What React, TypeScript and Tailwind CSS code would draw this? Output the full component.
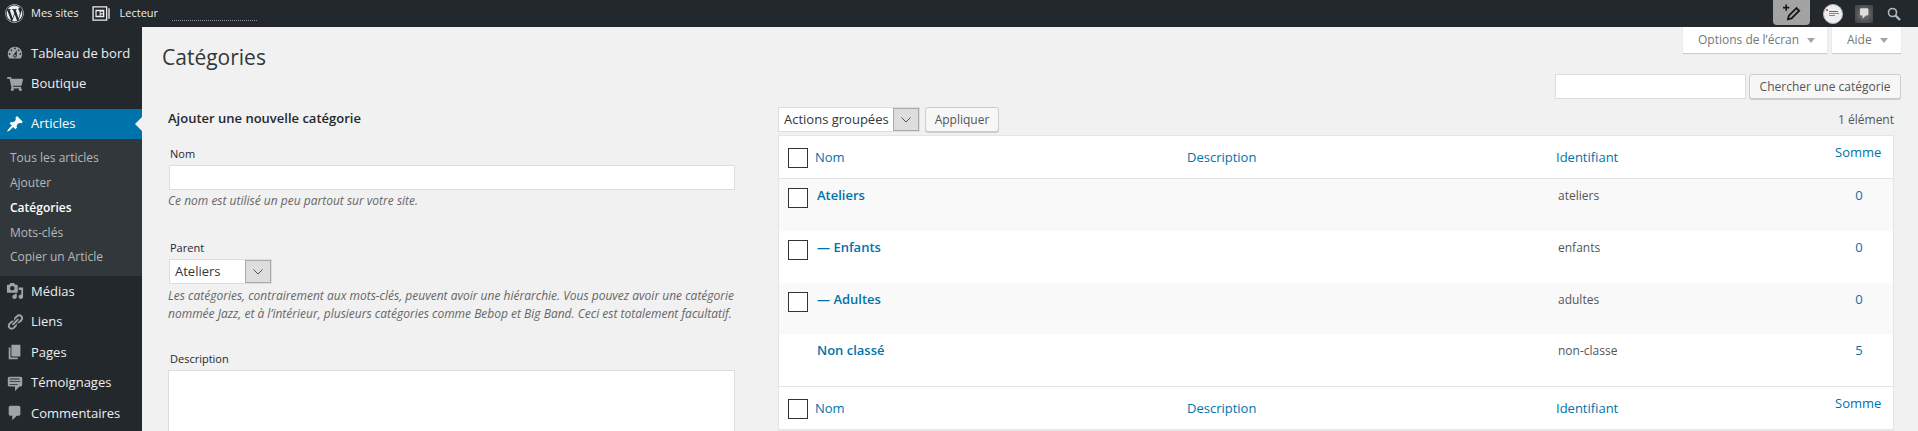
import { FaWordpress, FaShoppingCart } from 'react-icons/fa'

const icons = {
  dashboard: 'M3.76 16h12.48c1.1-1.37 1.76-3.11 1.76-5 0-4.42-3.58-8-8-8s-8 3.58-8 8c0 1.89.66 3.63 1.76 5zM10 4c.55 0 1 .45 1 1s-.45 1-1 1-1-.45-1-1 .45-1 1-1zM6 6c.55 0 1 .45 1 1s-.45 1-1 1-1-.45-1-1 .45-1 1-1zm8 0c.55 0 1 .45 1 1s-.45 1-1 1-1-.45-1-1 .45-1 1-1zm-5.37 5.55L12 7v6c0 1.1-.9 2-2 2s-2-.9-2-2c0-.57.24-1.08.63-1.45zM4 10c.55 0 1 .45 1 1s-.45 1-1 1-1-.45-1-1 .45-1 1-1zm12 0c.55 0 1 .45 1 1s-.45 1-1 1-1-.45-1-1 .45-1 1-1zm-5 3c0-.55-.45-1-1-1s-1 .45-1 1 .45 1 1 1 1-.45 1-1z',
  pin: 'M10.44 3.02l1.82-1.82 6.36 6.35-1.83 1.82c-1.05-.68-2.48-.57-3.41.36l-.75.75c-.92.93-1.04 2.35-.35 3.41l-1.83 1.82-2.41-2.41-2.8 2.79c-.42.42-3.38 2.71-3.8 2.29s1.86-3.39 2.28-3.81l2.79-2.79L4.1 9.36l1.83-1.82c1.05.69 2.48.57 3.41-.36l.75-.75c.93-.92 1.04-2.35.35-3.41z',
  media: 'M13 11V4c0-.55-.45-1-1-1h-1.67L9 1H5L3.67 3H2c-.55 0-1 .45-1 1v7c0 .55.45 1 1 1h10c.55 0 1-.45 1-1zM7 4.5c1.38 0 2.5 1.12 2.5 2.5S8.38 9.5 7 9.5 4.5 8.38 4.5 7 5.62 4.5 7 4.5zM14 6h5v10.5c0 1.38-1.12 2.5-2.5 2.5S14 17.88 14 16.5s1.12-2.5 2.5-2.5c.17 0 .34.02.5.05V9h-3V6zm-4 8.05V13h2v3.5c0 1.38-1.12 2.5-2.5 2.5S7 17.88 7 16.5 8.12 14 9.5 14c.17 0 .34.02.5.05z',
  links: 'M17.74 2.76c1.68 1.69 1.68 4.41 0 6.1l-1.53 1.52c-1.12 1.12-2.7 1.47-4.14 1.09l2.62-2.61.76-.77.76-.76c.84-.84.84-2.2 0-3.04-.84-.85-2.2-.85-3.04 0l-.77.76-3.38 3.38c-.37-1.44-.02-3.02 1.1-4.14l1.52-1.53c1.69-1.68 4.42-1.68 6.1 0zM8.59 13.43l5.34-5.34c.42-.42.42-1.1 0-1.52-.44-.43-1.13-.39-1.53 0l-5.33 5.34c-.42.42-.42 1.1 0 1.52.44.43 1.13.39 1.52 0zm-.76 2.29l4.14-4.15c.38 1.44.03 3.02-1.09 4.14l-1.52 1.53c-1.69 1.68-4.41 1.68-6.1 0-1.68-1.68-1.68-4.42 0-6.1l1.53-1.52c1.12-1.12 2.7-1.47 4.14-1.1l-4.14 4.15c-.85.84-.85 2.2 0 3.05.84.84 2.2.84 3.04 0z',
  pages: 'M6 15V2h10v13H6zm-1 1h8v2H3V5h2v11z',
  testimonial: 'M4 3h12c.55 0 1.02.2 1.41.59S18 4.45 18 5v7c0 .55-.2 1.02-.59 1.41S16.55 14 16 14h-1l-5 5v-5H4c-.55 0-1.02-.2-1.41-.59S2 12.55 2 12V5c0-.55.2-1.02.59-1.41S3.45 3 4 3zm11 2H4v1h11V5zm1 3H4v1h12V8zm-3 3H4v1h9v-1z',
  comment: 'M5 2h9c1.1 0 2 .9 2 2v7c0 1.1-.9 2-2 2h-2l-5 5v-5H5c-1.1 0-2-.9-2-2V4c0-1.1.9-2 2-2z',
}

function Dash({ d, className }: { d: string; className: string }) {
  return (
    <svg viewBox="0 0 20 20" fill="currentColor" className={className}>
      <path d={d} />
    </svg>
  )
}

function MenuRow({ icon, label }: { icon: string; label: string }) {
  return (
    <div className="flex items-center h-[30.5px] text-[#eeeeee]">
      <div className="w-[31px] pl-[6px] shrink-0 text-[#9ea3a8]">
        <Dash d={icon} className="w-[18px] h-[18px]" />
      </div>
      <span className="text-[13px]">{label}</span>
    </div>
  )
}

function SelectBox({ label, w }: { label: string; w: string }) {
  return (
    <div className={`flex items-stretch h-[25px] ${w} bg-white border border-[#dddddd]`}>
      <span className="flex-1 pl-[5px] text-[13px] leading-[23px] text-[#32373c] whitespace-nowrap">{label}</span>
      <span className="w-[26px] flex items-center justify-center bg-[#dddddd] border border-[#aaaaaa]">
        <svg width="10" height="6" viewBox="0 0 10 6" fill="none" stroke="#555555"><path d="M.5.5 5 5 9.5.5" /></svg>
      </span>
    </div>
  )
}

function Check() {
  return <span className="block w-5 h-5 border border-[#333333] bg-white shrink-0" />
}

const rows = [
  { name: 'Ateliers', slug: 'ateliers', count: 0, check: true, alt: true },
  { name: '— Enfants', slug: 'enfants', count: 0, check: true, alt: false },
  { name: '— Adultes', slug: 'adultes', count: 0, check: true, alt: true },
  { name: 'Non classé', slug: 'non-classe', count: 5, check: false, alt: false },
]

function HeadRow({ border }: { border: string }) {
  return (
    <div className={`flex h-[43px] items-start text-[13px] leading-[20px] text-[#0073aa] ${border}`}>
      <div className="w-[36px] pl-[9px] pt-[12px]"><Check /></div>
      <div className="w-[372px] pt-[11px]">Nom</div>
      <div className="w-[369px] pt-[11px]">Description</div>
      <div className="w-[279px] pt-[11px]">Identifiant</div>
      <div className="pt-[6px]">Somme</div>
    </div>
  )
}

export default function App() {
  return (
    <div className="h-[431px] overflow-hidden bg-[#f1f1f1] font-['Open_Sans',sans-serif]">
      <header className="flex items-center h-[27px] bg-[#23282d] text-[#eeeeee] text-[11px]">
        <FaWordpress className="ml-[5px] w-[19px] h-[19px] text-[#eeeeee]" />
        <span className="ml-[7px]">Mes sites</span>
        <svg viewBox="0 0 20 16" className="ml-[13px] w-[19px] h-[15px]" fill="none" stroke="#eeeeee">
          <path d="M1 1h14.5v14H1zM18 2.5v11" strokeWidth="1.4" />
          <path d="M3.5 4h9.5v8H3.5z" fill="#eeeeee" stroke="none" />
          <path d="M9 6h2.6v1.6H9zM9 9h2.6v1.4H9zM4.8 5.5H8v5H4.8z" fill="#23282d" stroke="none" />
        </svg>
        <span className="ml-[9px]">Lecteur</span>
        <span className="ml-[14px] mt-[13px] w-[85px] border-t border-dotted border-[#8a8e92]" />
        <div className="ml-auto flex items-center h-full">
          <span className="flex items-center justify-center w-[37px] h-[25px] mt-[-2px] rounded-b-[4px] bg-[#a3a3a3]">
            <svg viewBox="0 0 20 20" className="w-[18px] h-[18px]" fill="none" stroke="#15181b">
              <path d="M0 4h7M3.5 .5v7" strokeWidth="1.8" />
              <path d="M5.5 17l1-4L15 4.5l3 3L9.5 16z" strokeWidth="2" />
            </svg>
          </span>
          <span className="relative ml-[13px] flex flex-col items-start justify-center pl-[5px] w-[20px] h-[20px] rounded-full bg-[#eeeeee] gap-px border border-[#bbbbbb]">
            <span className="absolute left-[2px] top-[4px] w-[2px] h-[2px] bg-[#d24bb0]" />
            <span className="block w-[9px] h-px bg-[#666666]" />
            <span className="block w-[10px] h-px bg-[#888888]" />
            <span className="block w-[6px] h-px bg-[#888888]" />
          </span>
          <span className="ml-[12px] flex items-center justify-center w-[18px] h-[18px] bg-[radial-gradient(circle,#777777,#3a3f43)]">
            <Dash d={icons.comment} className="w-[13px] h-[13px] text-[#dddddd]" />
          </span>
          <svg viewBox="0 0 14 14" className="ml-[14px] mr-[17px] w-[14px] h-[14px]" fill="none" stroke="#b4b9be">
            <circle cx="5.5" cy="5.5" r="4" strokeWidth="1.6" />
            <path d="M8.5 8.5 13 13" strokeWidth="2.4" />
          </svg>
        </div>
      </header>

      <div className="flex h-[404px]">
        <aside className="w-[142px] shrink-0 bg-[#23282d] pt-[11px]">
          <MenuRow icon={icons.dashboard} label="Tableau de bord" />
          <div className="flex items-center h-[31px] text-[#eeeeee]">
            <div className="w-[31px] pl-[7px] shrink-0 text-[#9ea3a8]"><FaShoppingCart className="w-[16px] h-[16px]" /></div>
            <span className="text-[13px]">Boutique</span>
          </div>
          <div className="relative flex items-center h-[30px] mt-[9.5px] bg-[#0073aa] text-white">
            <div className="w-[31px] pl-[6px] shrink-0"><Dash d={icons.pin} className="w-[18px] h-[18px]" /></div>
            <span className="text-[13px]">Articles</span>
            <span className="absolute right-0 top-[8px] border-y-[7px] border-r-[7px] border-y-transparent border-r-[#f1f1f1]" />
          </div>
          <div className="h-[137px] bg-[#32373c] pl-[10px] pt-[5.5px] text-[12px] text-[#b4b9be]">
            <div className="h-[25px] leading-[25px]">Tous les articles</div>
            <div className="h-[25px] leading-[25px]">Ajouter</div>
            <div className="h-[25px] leading-[25px] font-semibold text-white">Catégories</div>
            <div className="h-[24.5px] leading-[25px]">Mots-clés</div>
            <div className="h-[25px] leading-[25px]">Copier un Article</div>
          </div>
          <MenuRow icon={icons.media} label="Médias" />
          <MenuRow icon={icons.links} label="Liens" />
          <MenuRow icon={icons.pages} label="Pages" />
          <MenuRow icon={icons.testimonial} label="Témoignages" />
          <MenuRow icon={icons.comment} label="Commentaires" />
        </aside>

        <main className="flex-1 min-w-0 pl-[20px] pr-[17px] text-[#444444]">
          <div className="flex justify-between h-[47px]">
            <h1 className="pt-[12px] text-[21px] leading-[36px] text-[#32373c]">Catégories</h1>
            <div className="flex gap-[5px]">
              <div className="flex items-center gap-[8px] w-[144px] h-[26px] pl-[15px] bg-white shadow-[0_1px_1px_rgba(0,0,0,0.15)] text-[12px] text-[#72777c]">
                Options de l’écran
                <span className="border-x-[4px] border-t-[5px] border-x-transparent border-t-[#a0a5aa]" />
              </div>
              <div className="flex items-center gap-[8px] w-[69px] h-[26px] pl-[15px] bg-white shadow-[0_1px_1px_rgba(0,0,0,0.15)] text-[12px] text-[#72777c]">
                Aide
                <span className="border-x-[4px] border-t-[5px] border-x-transparent border-t-[#a0a5aa]" />
              </div>
            </div>
          </div>

          <div className="flex justify-end gap-[3px] h-[25px]">
            <span className="w-[191px] bg-white border border-[#dddddd]" />
            <span className="flex items-center justify-center w-[152px] bg-[#f7f7f7] border border-[#cccccc] rounded-[3px] shadow-[0_1px_0_#cccccc] text-[12px] text-[#555555]">Chercher une catégorie</span>
          </div>

          <div className="flex mt-[8px]">
            <section className="w-[616px] shrink-0 pl-[6px]">
              <h2 className="mt-[2px] text-[13px] leading-[18px] font-semibold text-[#23282d]">Ajouter une nouvelle catégorie</h2>
              <label className="block mt-[18px] pl-[2px] text-[11px] leading-[18px] text-[#23282d]">Nom</label>
              <div className="h-[25px] w-[566px] ml-[1px] mt-[2px] bg-white border border-[#dddddd]" />
              <p className="mt-[2px] text-[12px] leading-[18px] italic text-[#666666]">Ce nom est utilisé un peu partout sur votre site.</p>
              <label className="block mt-[29px] pl-[2px] text-[11px] leading-[18px] text-[#23282d]">Parent</label>
              <div className="mt-[2px] ml-[1px]"><SelectBox label="Ateliers" w="w-[103px]" /></div>
              <p className="mt-[3px] w-[590px] text-[12px] leading-[18px] italic text-[#666666]">
                Les catégories, contrairement aux mots-clés, peuvent avoir une hiérarchie. Vous pouvez avoir une catégorie nommée Jazz, et à l’intérieur, plusieurs catégories comme Bebop et Big Band. Ceci est totalement facultatif.
              </p>
              <label className="block mt-[27px] pl-[2px] text-[11px] leading-[18px] text-[#23282d]">Description</label>
              <div className="h-[80px] w-[567px] mt-[2px] bg-white border border-[#dddddd]" />
            </section>

            <section className="flex-1 min-w-0 pr-[7px]">
              <div className="flex items-center h-[25px] gap-[5px]">
                <SelectBox label="Actions groupées" w="w-[142px]" />
                <span className="flex items-center justify-center w-[74px] h-[25px] bg-[#f7f7f7] border border-[#cccccc] rounded-[3px] shadow-[0_1px_0_#cccccc] text-[12px] text-[#555555]">Appliquer</span>
                <span className="ml-auto text-[12px] text-[#555555]">1 élément</span>
              </div>
              <div className="mt-[3px] bg-white border border-[#e5e5e5] shadow-[0_1px_1px_rgba(0,0,0,0.04)]">
                <HeadRow border="border-b border-[#e1e1e1]" />
                {rows.map((r) => (
                  <div key={r.slug} className={`flex items-start h-[51.75px] ${r.alt ? 'bg-[#f9f9f9]' : 'bg-white'}`}>
                    <div className="w-[38px] shrink-0 pl-[9px] pt-[9px]">{r.check && <Check />}</div>
                    <div className="w-[741px] shrink-0 pt-[6px] text-[13px] leading-[20px] font-semibold text-[#0073aa]">{r.name}</div>
                    <div className="w-[267px] shrink-0 pt-[8px] text-[12px] leading-[18px] text-[#555555]">{r.slug}</div>
                    <div className="w-[68px] shrink-0 pt-[6px] text-center text-[13px] leading-[20px] text-[#0073aa]">{r.count}</div>
                  </div>
                ))}
                <HeadRow border="border-t border-[#e1e1e1]" />
              </div>
            </section>
          </div>
        </main>
      </div>
    </div>
  )
}
